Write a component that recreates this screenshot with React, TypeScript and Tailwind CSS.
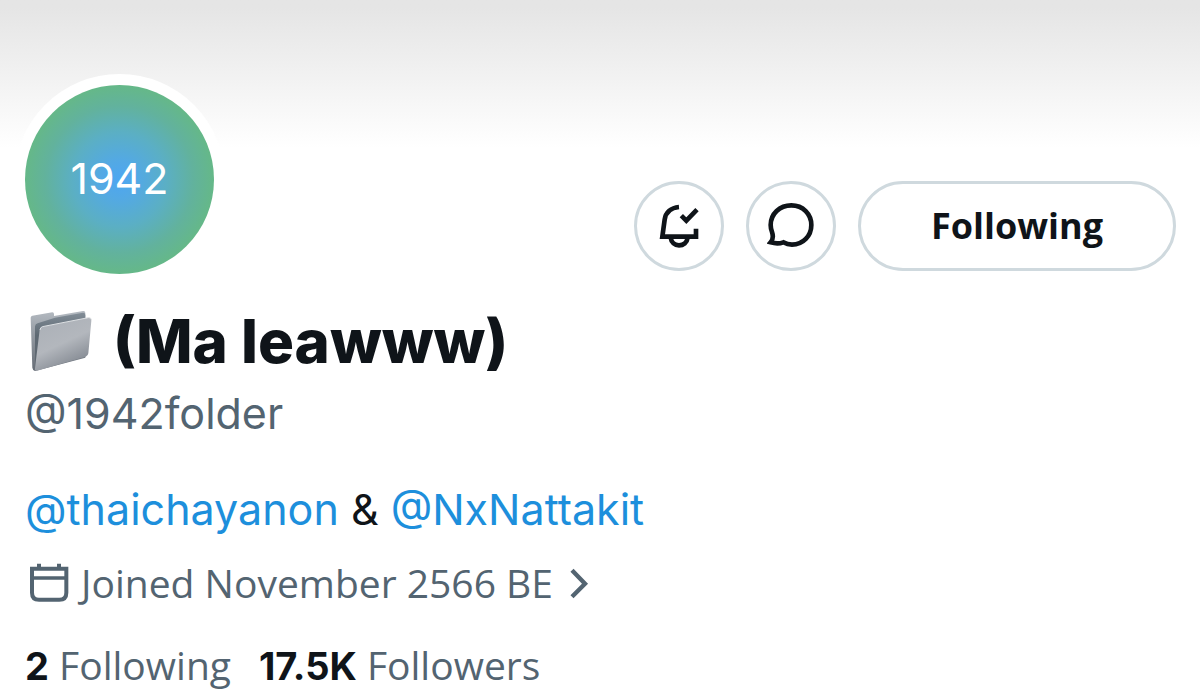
import type { ReactNode } from "react";

function BellCheckIcon() {
  return (
    <svg viewBox="105 94 144 144" className="size-12" fill="none" stroke="currentColor" strokeWidth={14} aria-hidden="true">
      <path d="M177 109C153 111 137 125 134 147L127 198H228V174" />
      <path d="M152 201C154 216 164 224 177 224S201 216 203 201" />
      <path d="M184 135L199 150L231 117" />
    </svg>
  );
}

function MessageIcon() {
  return (
    <svg viewBox="442 94 144 144" className="size-12" fill="none" stroke="currentColor" strokeWidth={14} aria-hidden="true">
      <path d="M453 215C460 207 461 196 457 184C454 176 453 170 453 163C453 130 480 104 515 104C550 104 575 130 575 163C575 196 550 222 517 222C507 222 498 219 491 215C480 219 466 219 453 215Z" />
    </svg>
  );
}

function FolderIcon() {
  return (
    <svg viewBox="88 54 192 192" className="size-16" role="img" aria-label="Folder">
      <defs>
        <linearGradient id="folderBack" x1="0" y1="0" x2="0" y2="1">
          <stop offset="0" stopColor="#b4bac1" />
          <stop offset="1" stopColor="#646b74" />
        </linearGradient>
        <linearGradient id="folderInside" x1="0" y1="0" x2="0" y2="1">
          <stop offset="0" stopColor="#828d97" />
          <stop offset="0.4" stopColor="#5e6973" />
          <stop offset="1" stopColor="#5e666f" />
        </linearGradient>
        <linearGradient id="folderFront" x1="0.2" y1="0" x2="0.7" y2="1">
          <stop offset="0" stopColor="#abb0b7" />
          <stop offset="0.5" stopColor="#b3b7bd" />
          <stop offset="1" stopColor="#7b818a" />
        </linearGradient>
      </defs>
      <path d="M93 80Q93 75 98 74L158 64Q163 64 163 69V75L250 60Q257 59 257 66V200L106 240Q99 238 98 230Z" fill="url(#folderBack)" />
      <path d="M106 106Q107 99 114 97L166 80L250 65Q257 65 257 72V180L106 236Z" fill="url(#folderInside)" />
      <path d="M120 116Q121 109 128 107L266 80Q276 79 275 89L266 187Q265 195 258 197L112 239Q104 240 106 232Z" fill="url(#folderFront)" />
      <path d="M121 117Q122 109 128 107L266 80Q274 79 275 86" fill="none" stroke="#dde0e3" strokeWidth={3} />
    </svg>
  );
}

function CalendarIcon() {
  return (
    <svg viewBox="87 248 120 120" className="size-10" fill="none" stroke="currentColor" strokeWidth={12} aria-hidden="true">
      <path d="M96 265H199V337Q199 358 178 358H117Q96 358 96 337Z" />
      <path d="M96 293H199" strokeWidth={10} />
      <path d="M117 250V265M177 250V265" />
    </svg>
  );
}

function ChevronIcon() {
  return (
    <svg viewBox="720 264 60 93" className="h-[31px] w-5" fill="none" stroke="currentColor" strokeWidth={13} aria-hidden="true">
      <path d="M729 271L768 311L729 350" />
    </svg>
  );
}

function RoundButton({ label, children }: { label: string; children: ReactNode }) {
  return (
    <button
      type="button"
      aria-label={label}
      className="flex size-[90px] items-center justify-center rounded-full border-[3px] border-[#cfd9de] bg-white"
    >
      {children}
    </button>
  );
}

function Stat({ href, value, label }: { href: string; value: string; label: string }) {
  return (
    <a href={href}>
      <strong className="font-['Inter',sans-serif] text-[38px] font-bold text-[#0f1419]">{value}</strong> {label}
    </a>
  );
}

export default function App() {
  return (
    <main className="min-h-screen bg-white font-['Inter',sans-serif] text-[#0f1419]">
      <div className="h-[148px] bg-linear-to-b from-[#e5e5e5] from-5% to-white" />

      <div className="pr-6 pl-[25px]">
        <div className="-mt-[74px] flex items-end justify-between">
          <div className="-ml-[11px] flex size-[211px] items-center justify-center rounded-full bg-white">
            <div className="flex size-[189px] items-center justify-center rounded-full bg-[radial-gradient(circle_closest-side,#4da6f2_0%,#53a9e4_20%,#5bafc4_50%,#62b29d_78%,#65b888_100%)]">
              <span className="pb-1 text-[43px] leading-[48px] text-white">1942</span>
            </div>
          </div>
          <div className="mb-[14px] flex gap-[22px]">
            <RoundButton label="Notifications">
              <BellCheckIcon />
            </RoundButton>
            <RoundButton label="Message">
              <MessageIcon />
            </RoundButton>
            <button
              type="button"
              className="h-[90px] w-[318px] rounded-full border-[3px] border-[#cfd9de] bg-white font-['Open_Sans',sans-serif] text-[36px] font-bold"
            >
              Following
            </button>
          </div>
        </div>

        <h1 className="mt-5 flex h-[72px] items-center gap-5 pl-1 text-[60px] leading-[72px] font-extrabold">
          <FolderIcon />
          (Ma leawww)
        </h1>
        <p className="mt-2 text-[43px] leading-[56px] text-[#536471]">@1942folder</p>

        <p className="mt-10 text-[43px] leading-[56px]">
          <a href="#thaichayanon" className="text-[#1d8fdc]">@thaichayanon</a> &amp;{" "}
          <a href="#NxNattakit" className="text-[#1d8fdc]">@NxNattakit</a>
        </p>

        <a
          href="#joined"
          className="mt-[22px] flex items-center gap-3 pl-1 font-['Open_Sans',sans-serif] text-[39px] leading-[48px] text-[#536471]"
        >
          <CalendarIcon />
          <span className="pr-1">Joined November 2566 BE</span>
          <ChevronIcon />
        </a>

        <div className="mt-[34px] flex gap-7 font-['Open_Sans',sans-serif] text-[39px] leading-[48px] text-[#536471]">
          <Stat href="#following" value="2" label="Following" />
          <Stat href="#followers" value="17.5K" label="Followers" />
        </div>
      </div>
    </main>
  );
}
